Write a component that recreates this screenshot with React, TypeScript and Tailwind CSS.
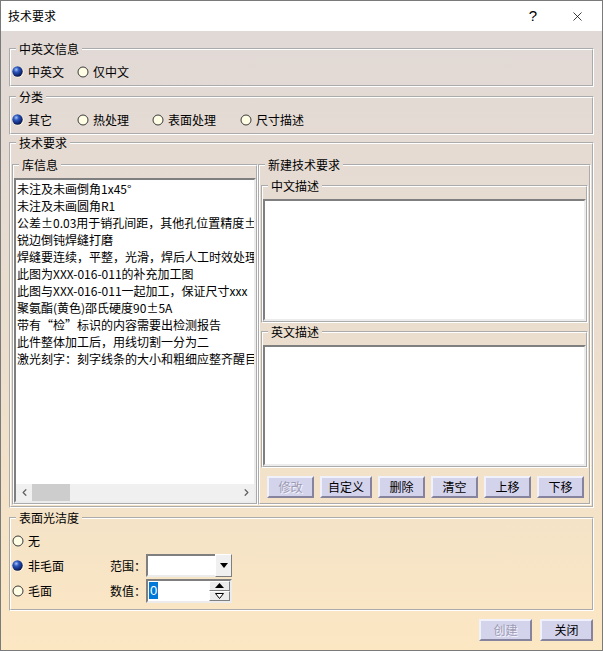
import React from 'react';
import { X, ChevronLeft, ChevronRight } from 'lucide-react';

const libItems = [
  '未注及未画倒角1x45°',
  '未注及未画圆角R1',
  '公差±0.03用于销孔间距，其他孔位置精度±0.1',
  '锐边倒钝焊缝打磨',
  '焊缝要连续，平整，光滑，焊后人工时效处理',
  '此图为XXX-016-011的补充加工图',
  '此图与XXX-016-011一起加工，保证尺寸xxx',
  '聚氨酯(黄色)邵氏硬度90±5A',
  '带有“检”标识的内容需要出检测报告',
  '此件整体加工后，用线切割一分为二',
  '激光刻字：刻字线条的大小和粗细应整齐醒目',
];

// CATIA style radio: pale yellow ring or blue ball
function Radio({ on }: { on?: boolean }) {
  if (on) {
    return (
      <svg width="12" height="12" viewBox="0 0 12 12" className="shrink-0">
        <defs>
          <radialGradient id="ball" cx="38%" cy="32%" r="70%">
            <stop offset="0" stopColor="#a9c4f4" />
            <stop offset="0.35" stopColor="#2d58c0" />
            <stop offset="1" stopColor="#04124e" />
          </radialGradient>
        </defs>
        <circle cx="6" cy="6" r="5.8" fill="#fff6d8" />
        <circle cx="5.5" cy="5.5" r="5.2" fill="url(#ball)" />
      </svg>
    );
  }
  return (
    <svg width="12" height="12" viewBox="0 0 12 12" className="shrink-0">
      <circle cx="6" cy="6" r="5" fill="#fffde4" stroke="#3a3a3a" strokeWidth="1" />
    </svg>
  );
}

function RadioItem({ label, on, w }: { label: string; on?: boolean; w?: string }) {
  return (
    <div className={`flex items-center gap-[4px] h-[16px] ${w ?? ''}`}>
      <Radio on={on} />
      <span>{label}</span>
    </div>
  );
}

function Group({ title, className, children }: { title: string; className?: string; children: React.ReactNode }) {
  return (
    <fieldset className={`border-2 border-white [border-style:groove] min-w-0 ${className ?? ''}`}>
      <legend className="ml-[5px] px-[3px] leading-[16px] text-[12px]">{title}</legend>
      {children}
    </fieldset>
  );
}

function Btn({ label, disabled, w }: { label: string; disabled?: boolean; w: string }) {
  return (
    <div
      className={`${w} h-[22px] flex items-center justify-center text-[12px] bg-[#d4d3ec] border-2 border-t-[#f1f1fb] border-l-[#f1f1fb] border-b-[#85839e] border-r-[#85839e] ${
        disabled ? 'text-[#9d9cb4] [text-shadow:1px_1px_0_#f4f4fc]' : 'text-black'
      }`}
    >
      {label}
    </div>
  );
}

const inset = 'border-2 border-t-[#7f7f7f] border-l-[#7f7f7f] border-b-[#ececec] border-r-[#ececec] bg-white';

export default function App() {
  return (
    <div className="w-[603px] h-[651px] flex flex-col border border-[#7a7a7a] text-black text-[12px] font-['Microsoft_YaHei','Noto_Sans_CJK_SC',sans-serif] overflow-hidden">
      {/* title bar */}
      <div className="h-[30px] shrink-0 bg-white flex items-center pl-[7px]">
        <span className="text-[12px]">技术要求</span>
        <span className="ml-auto mr-[33px] text-[15px] font-['Liberation_Sans',sans-serif]">?</span>
        <X size={15} strokeWidth={1.2} className="mr-[17px]" />
      </div>

      {/* body */}
      <div className="flex-1 flex flex-col px-[8px] bg-gradient-to-b from-[#e1d9d6] via-[#ebdece] to-[#fce7c3]">
        <Group title="中英文信息" className="mt-[10px]">
          <div className="flex pt-[7px] pb-[5px] pl-[1px]">
            <RadioItem label="中英文" on w="w-[65px]" />
            <RadioItem label="仅中文" />
          </div>
        </Group>

        <Group title="分类" className="mt-[2px]">
          <div className="flex pt-[7px] pb-[5px] pl-[1px]">
            <RadioItem label="其它" on w="w-[65px]" />
            <RadioItem label="热处理" w="w-[75px]" />
            <RadioItem label="表面处理" w="w-[88px]" />
            <RadioItem label="尺寸描述" />
          </div>
        </Group>

        <Group title="技术要求">
          <div className="flex pt-[6px] pb-[1px] pl-[1px] pr-[1px]">
            <Group title="库信息" className="w-[246px] shrink-0">
              <div className="pt-[5px]">
                <div className={`h-[325px] flex flex-col ${inset}`}>
                  <div className="flex-1 overflow-hidden pl-[1px]">
                    {libItems.map((t) => (
                      <div key={t} className="leading-[17px] whitespace-nowrap">
                        {t}
                      </div>
                    ))}
                  </div>
                  <div className="h-[17px] shrink-0 flex items-center bg-[#f0f0f0]">
                    <div className="w-[16px] flex justify-center">
                      <ChevronLeft size={11} strokeWidth={2.6} color="#606060" />
                    </div>
                    <div className="w-[38px] h-full bg-[#cdcdcd]" />
                    <div className="flex-1" />
                    <div className="w-[16px] flex justify-center">
                      <ChevronRight size={11} strokeWidth={2.6} color="#606060" />
                    </div>
                  </div>
                </div>
              </div>
            </Group>

            <Group title="新建技术要求" className="flex-1">
              <div className="flex flex-col pt-[5px] px-[1px] pb-[5px]">
                <Group title="中文描述">
                  <div className="pt-[5px]">
                    <div className={`h-[122px] ${inset}`} />
                  </div>
                </Group>
                <Group title="英文描述" className="mt-[1px]">
                  <div className="pt-[5px]">
                    <div className={`h-[121px] ${inset}`} />
                  </div>
                </Group>
                <div className="flex gap-[6px] mt-[8px] pl-[6px]">
                  <Btn label="修改" disabled w="w-[47px]" />
                  <Btn label="自定义" w="w-[52px]" />
                  <Btn label="删除" w="w-[47px]" />
                  <Btn label="清空" w="w-[47px]" />
                  <Btn label="上移" w="w-[47px]" />
                  <Btn label="下移" w="w-[47px]" />
                </div>
              </div>
            </Group>
          </div>
        </Group>

        <Group title="表面光洁度" className="mt-[2px]">
          <div className="grid grid-cols-[98px_36px_auto] grid-rows-[25px_25px_25px] items-center pt-[2px] pb-[6px] pl-[1px]">
            <RadioItem label="无" />
            <div />
            <div />

            <RadioItem label="非毛面" on />
            <span>范围：</span>
            <div className={`w-[86px] h-[23px] flex`}>
              <div className="flex-1 h-full border-2 border-r-0 border-t-[#7f7f7f] border-l-[#7f7f7f] border-b-[#ececec] bg-white" />
              <div className="w-[17px] h-full flex items-center justify-center bg-[#f0f0f0] border border-t-white border-l-white border-b-[#7f7f7f] border-r-[#7f7f7f]">
                <svg width="8" height="5" viewBox="0 0 8 5">
                  <path d="M0 0 H8 L4 5 Z" fill="#000" />
                </svg>
              </div>
            </div>

            <RadioItem label="毛面" />
            <span>数值：</span>
            <div className="w-[86px] h-[24px] flex border-2 border-t-[#7f7f7f] border-l-[#7f7f7f] border-b-[#ececec] border-r-[#ececec] bg-white">
              <div className="flex-1 flex items-center pl-[1px]">
                <span className="bg-[#0078d7] text-white leading-[17px] px-[1px] font-['Liberation_Sans',sans-serif] text-[13px]">0</span>
              </div>
              <div className="w-[21px] flex flex-col">
                <div className="flex-1 flex items-center justify-center bg-[#ececec] border border-t-white border-l-white border-b-[#7f7f7f] border-r-[#7f7f7f]">
                  <svg width="9" height="5" viewBox="0 0 9 5">
                    <path d="M0 5 H9 L4.5 0 Z" fill="#000" />
                  </svg>
                </div>
                <div className="flex-1 flex items-center justify-center bg-[#ececec] border border-t-white border-l-white border-b-[#7f7f7f] border-r-[#7f7f7f]">
                  <svg width="9" height="6" viewBox="0 0 9 6">
                    <path d="M0.5 0.5 H8.5 L4.5 5.5 Z" fill="#fff" stroke="#000" strokeWidth="1" />
                  </svg>
                </div>
              </div>
            </div>
          </div>
        </Group>

        <div className="flex justify-end gap-[8px] mt-[8px] pr-[1px]">
          <Btn label="创建" disabled w="w-[53px]" />
          <Btn label="关闭" w="w-[53px]" />
        </div>
      </div>
    </div>
  );
}
